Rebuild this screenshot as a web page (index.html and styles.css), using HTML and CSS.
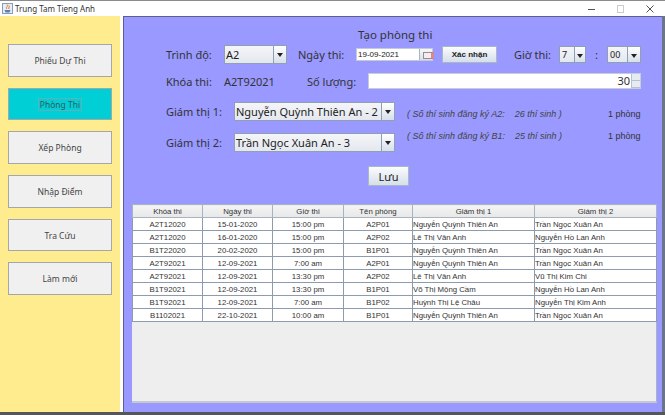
FILE: index.html
```html
<!DOCTYPE html>
<html lang="vi">
<head>
	<meta charset="UTF-8">
	<title>Trung Tam Tieng Anh</title>
	<link rel="stylesheet" href="styles.css">
</head>
<body>
	<div id="win">
		<header id="titlebar">
			<svg class="app-icon" width="11" height="11" viewBox="0 0 11 11">
				<rect x="0.500" y="0.500" width="10" height="10" fill="#e8eef6" stroke="#8b9bb3"/>
				<path d="M5 1.500c2 2-2 2.500 0 4.500M7 2.500c1 1.500-1 2 0 3.500" fill="none" stroke="#d9722a"/>
				<path d="M2.500 7h6l-1 2.500h-4z" fill="#5a7fb5"/>
			</svg>
			<span class="app-name">Trung Tam Tieng Anh</span>
			<div class="win-btns">
				<svg width="8" height="8" viewBox="0 0 8 8"><path d="M0 4.500h7" stroke="#555"/></svg>
				<svg width="8" height="8" viewBox="0 0 8 8"><rect x="0.500" y="0.500" width="6" height="7" fill="none" stroke="#ccc"/></svg>
				<svg width="8" height="8" viewBox="0 0 8 8"><path d="M0.500 0.500l7 7M7.500 0.500l-7 7" stroke="#555"/></svg>
			</div>
		</header>
		<div id="main">
			<aside id="side">
				<a class="side-btn" href="javascript:;">Phiếu Dự Thi</a>
				<a class="side-btn active" href="javascript:;"><span>Phòng Thi</span></a>
				<a class="side-btn" href="javascript:;">Xếp Phòng</a>
				<a class="side-btn" href="javascript:;">Nhập Điểm</a>
				<a class="side-btn" href="javascript:;">Tra Cứu</a>
				<a class="side-btn" href="javascript:;">Làm mới</a>
			</aside>
			<section id="panel">
				<h1 class="form-title">Tạo phòng thi</h1>
				<div class="row row1">
					<label class="lbl w-trinh">Trình độ:</label>
					<div class="combo c-level"><span class="val">A2</span><b class="arrow"></b></div>
					<label class="lbl w-ngay">Ngày thi:</label>
					<div class="date"><span class="date-val">19-09-2021</span><i class="cal"></i></div>
					<a class="btn btn-ok" href="javascript:;">Xác nhận</a>
					<label class="lbl w-gio">Giờ thi:</label>
					<div class="combo c-hour"><span class="val">7</span><b class="arrow"></b></div>
					<span class="lbl colon">:</span>
					<div class="combo c-min"><span class="val">00</span><b class="arrow"></b></div>
				</div>
				<div class="row row2">
					<label class="lbl w-trinh">Khóa thi:</label>
					<span class="lbl code">A2T92021</span>
					<label class="lbl w-sl">Số lượng:</label>
					<div class="spinner"><span class="spin-val">30</span><div class="spin-btns"><i></i><i></i></div></div>
				</div>
				<div class="row row3">
					<label class="lbl w-gt">Giám thị 1:</label>
					<div class="combo c-gt"><span class="val">Nguyễn Quỳnh Thiên An - 2</span><b class="arrow"></b></div>
					<em class="note">( Số thí sinh đăng ký A2:&nbsp;&nbsp;&nbsp;&nbsp;26 thí sinh )</em>
					<span class="rooms">1 phòng</span>
				</div>
				<div class="row row4">
					<label class="lbl w-gt">Giám thị 2:</label>
					<div class="combo c-gt"><span class="val">Trần Ngọc Xuân An - 3</span><b class="arrow"></b></div>
					<em class="note">( Số thí sinh đăng ký B1:&nbsp;&nbsp;&nbsp;&nbsp;25 thí sinh )</em>
					<span class="rooms">1 phòng</span>
				</div>
				<div class="row-save"><a class="btn btn-save" href="javascript:;">Lưu</a></div>
				<div id="tablebox">
					<table>
						<colgroup>
							<col class="c1"><col class="c2"><col class="c3"><col class="c4"><col class="c5"><col class="c6">
						</colgroup>
						<thead>
							<tr><th>Khóa thi</th><th>Ngày thi</th><th>Giờ thi</th><th>Tên phòng</th><th>Giám thị 1</th><th>Giám thị 2</th></tr>
						</thead>
						<tbody>
							<tr><td>A2T12020</td><td>15-01-2020</td><td>15:00 pm</td><td>A2P01</td><td>Nguyễn Quỳnh Thiên An</td><td>Trần Ngọc Xuân An</td></tr>
							<tr><td>A2T12020</td><td>16-01-2020</td><td>15:00 pm</td><td>A2P02</td><td>Lê Thị Vân Anh</td><td>Nguyễn Hồ Lan Anh</td></tr>
							<tr><td>B1T22020</td><td>20-02-2020</td><td>15:00 pm</td><td>B1P01</td><td>Nguyễn Quỳnh Thiên An</td><td>Trần Ngọc Xuân An</td></tr>
							<tr><td>A2T92021</td><td>12-09-2021</td><td>7:00 am</td><td>A2P01</td><td>Nguyễn Quỳnh Thiên An</td><td>Trần Ngọc Xuân An</td></tr>
							<tr><td>A2T92021</td><td>12-09-2021</td><td>13:30 pm</td><td>A2P02</td><td>Lê Thị Vân Anh</td><td>Vũ Thị Kim Chi</td></tr>
							<tr><td>B1T92021</td><td>12-09-2021</td><td>13:30 pm</td><td>B1P01</td><td>Võ Thị Mộng Cầm</td><td>Nguyễn Hồ Lan Anh</td></tr>
							<tr><td>B1T92021</td><td>12-09-2021</td><td>7:00 am</td><td>B1P02</td><td>Huỳnh Thị Lệ Châu</td><td>Nguyễn Thị Kim Anh</td></tr>
							<tr><td>B1102021</td><td>22-10-2021</td><td>10:00 am</td><td>B1P01</td><td>Nguyễn Quỳnh Thiên An</td><td>Trần Ngọc Xuân An</td></tr>
						</tbody>
					</table>
				</div>
			</section>
		</div>
	</div>
</body>
</html>
```

FILE: styles.css
```css
* {
	box-sizing: border-box;
}
html, body {
	margin: 0;
	height: 100%;
}
body {
	font-family: "Noto Sans", "Liberation Sans", sans-serif;
	color: #333;
	background: #fff;
}
a {
	text-decoration: none;
	color: inherit;
}
#win {
	width: 665px;
	height: 415px;
	display: flex;
	flex-direction: column;
	border-top: 1px solid #8c8c8c;
	border-bottom: 3px solid #55565c;
}
#titlebar {
	height: 15px;
	flex: none;
	display: flex;
	align-items: center;
	padding: 0 0 0 2px;
	font-size: 8px;
	color: #333;
	background: #fff;
}
.app-icon {
	margin-right: 2px;
}
.win-btns {
	margin-left: auto;
	display: flex;
	gap: 21px;
	padding-right: 11px;
}
#main {
	flex: 1;
	display: flex;
	min-height: 0;
	border-right: 3px solid #6c7488;
}
#side {
	width: 120px;
	flex: none;
	background: #ffec8f;
	padding: 28px 8px 0 8px;
	display: flex;
	flex-direction: column;
	gap: 11px;
}
.side-btn {
	height: 32.700px;
	display: flex;
	align-items: center;
	justify-content: center;
	background: #f0f0f0;
	border: 1px solid #a3a7ab;
	font-size: 8.500px;
	color: #444;
}
.side-btn.active {
	background: #00cfd6;
	color: #35585c;
}
.side-btn.active span {
	outline: 1px solid #5fb1bc;
	line-height: 11px;
	padding: 0 1px;
}
#panel {
	flex: 1;
	margin-left: 3px;
	background: #9999ff;
	border-left: 1px solid #5d5d8f;
	border-top: 1px solid #5d5d8f;
	padding: 11px 5px 9px 8px;
	display: flex;
	flex-direction: column;
	min-width: 0;
}
.form-title {
	margin: 0;
	font-size: 11.500px;
	font-weight: normal;
	line-height: 14px;
	padding-left: 226px;
}
.row {
	display: flex;
	align-items: center;
	height: 20px;
	padding-left: 34px;
}
.lbl {
	font-size: 11px;
	color: #333;
	flex: none;
}
.row1 { margin-top: 2px; }
.row2 { margin-top: 7px; }
.row3 { margin-top: 10px; }
.row4 { margin-top: 11px; }
.w-trinh { width: 58px; }
.w-ngay { width: 58px; margin-left: 11px; }
.w-gio { width: 45px; margin-left: 17px; }
.w-sl { width: 61px; }
.w-gt { width: 68px; }
.code { width: 83px; }
.colon { width: 21px; text-align: center; }
.combo {
	display: flex;
	align-items: stretch;
	flex: none;
	height: 19px;
	border: 1px solid #8fa0b5;
	background: linear-gradient(#f4f5f7, #e4e8ee);
	font-size: 11px;
	color: #222;
}
.combo .val {
	flex: 1;
	padding-left: 1px;
	line-height: 17px;
	white-space: nowrap;
	overflow: hidden;
}
.arrow {
	width: 13px;
	flex: none;
	border-left: 1px solid #8fa0b5;
	background: linear-gradient(#fff, #d7dfe9);
	position: relative;
}
.arrow::after {
	content: "";
	position: absolute;
	left: 3px;
	top: 7px;
	border: 3px solid transparent;
	border-top: 4px solid #222;
	border-bottom: 0;
}
.c-level { width: 63px; }
.c-hour, .c-min { height: 17px; font-size: 9px; }
.c-hour .val, .c-min .val { line-height: 15px; padding-left: 2px; }
.c-hour { width: 27px; }
.c-hour .arrow { width: 11px; }
.c-hour .arrow::after { left: 2px; }
.c-min { width: 34px; }
.c-gt { width: 161px; }
.date {
	width: 77px;
	height: 13px;
	flex: none;
	display: flex;
	background: #fff;
	border: 1px solid #c4cad6;
	font-family: "Liberation Sans", sans-serif;
	font-size: 8px;
	line-height: 11px;
	color: #222;
}
.date-val {
	flex: 1;
	padding-left: 1px;
}
.cal {
	width: 13px;
	border-left: 1px solid #aab4c2;
	background: linear-gradient(#f6f7f9, #d9dfe7);
	position: relative;
}
.cal::after {
	content: "";
	position: absolute;
	left: 3px;
	top: 3px;
	width: 7px;
	height: 5px;
	background: #fbeaea;
	border: 1px solid #8a8f99;
	border-right: 3px solid #d9898a;
}
.btn {
	display: flex;
	align-items: center;
	justify-content: center;
	flex: none;
	border: 1px solid #a9b8c9;
	background: linear-gradient(#fbfcfd, #d5deea);
	color: #222;
}
.btn-ok {
	width: 55px;
	height: 17px;
	margin-left: 9px;
	font-family: "Liberation Sans", sans-serif;
	font-size: 8px;
	font-weight: bold;
}
.spinner {
	width: 273px;
	height: 16px;
	flex: none;
	display: flex;
	background: #fff;
	border: 1px solid #c7ccd6;
	font-size: 11px;
	line-height: 14px;
}
.spin-val {
	flex: 1;
	text-align: right;
	padding-right: 1px;
}
.spin-btns {
	width: 9px;
	display: flex;
	flex-direction: column;
	border-left: 1px solid #b7c0cc;
}
.spin-btns i {
	flex: 1;
	background: #e6ebf2;
	border-bottom: 1px solid #b7c0cc;
}
.note {
	font-family: "Liberation Sans", sans-serif;
	font-size: 9px;
	color: #444;
	margin-left: 12px;
	width: 201px;
	flex: none;
	white-space: nowrap;
}
.rooms {
	font-family: "Liberation Sans", sans-serif;
	font-size: 9px;
	color: #333;
}
.row3 .note, .row3 .rooms {
	margin-top: 5px;
}
.row4 .note, .row4 .rooms {
	align-self: flex-start;
	margin-top: -1px;
}
.row-save {
	display: flex;
	padding-left: 236px;
	margin-top: 14px;
}
.btn-save {
	width: 41px;
	height: 20px;
	font-size: 11px;
}
#tablebox {
	flex: 1;
	margin-top: 18px;
	background: #eeeeee;
	border-right: 1px solid #a9b4c2;
	border-bottom: 2px solid #c4c9d0;
	min-height: 0;
}
table {
	width: 524px;
	table-layout: fixed;
	border-collapse: collapse;
	font-family: "Liberation Sans", sans-serif;
	font-size: 7.800px;
	color: #333;
}
col.c1 { width: 70px; }
col.c2 { width: 70px; }
col.c3 { width: 71px; }
col.c4 { width: 69px; }
col.c5 { width: 122px; }
col.c6 { width: 122px; }
th {
	height: 13px;
	padding: 0;
	font-weight: normal;
	background: linear-gradient(#f4f4f4, #e8e8e8);
	border: 1px solid #a9b4c2;
}
td {
	height: 13px;
	padding: 0;
	background: #fff;
	text-align: center;
	border: 1px solid #8d9bad;
	white-space: nowrap;
}
td:nth-child(n+5) {
	text-align: left;
}
```
